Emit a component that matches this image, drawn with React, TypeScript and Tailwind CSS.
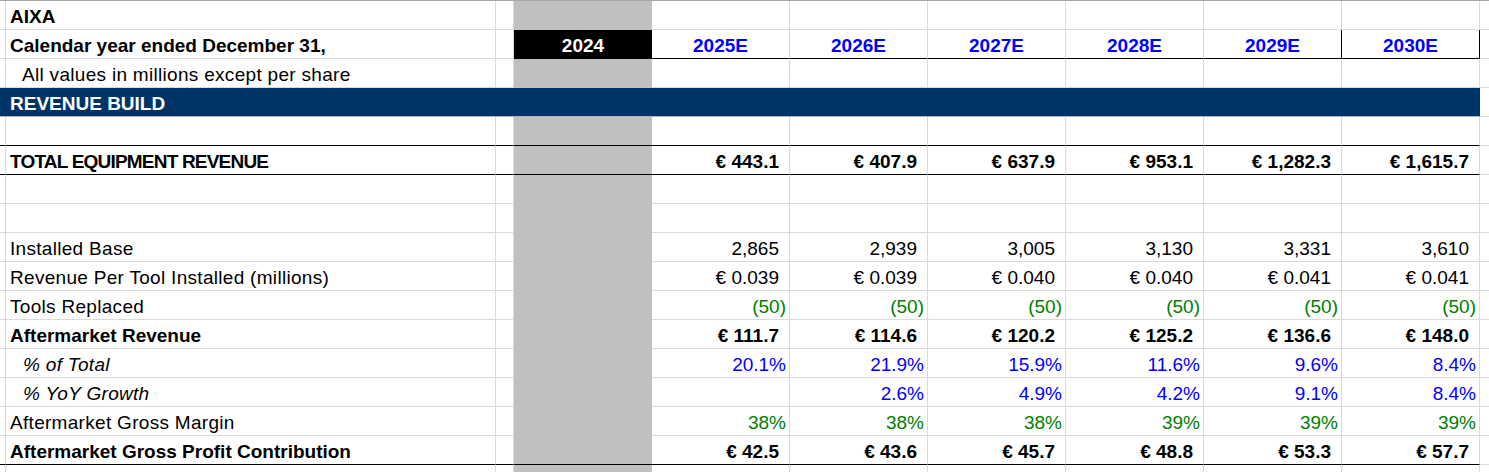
import React from "react";

const years = ["2025E", "2026E", "2027E", "2028E", "2029E", "2030E"];

type Line = {
  label?: React.ReactNode;
  labelCls?: string;
  values?: string[];
  valueCls?: string;
  bottom?: "black" | "grid";
};

const lines: Line[] = [
  { label: "AIXA", labelCls: "font-bold" },
  { label: "Calendar year ended December 31,", labelCls: "font-bold" },
  { label: "All values in millions except per share", labelCls: "pl-[16px] tracking-[0.3px]" },
  {},
  { bottom: "black" },
  {
    label: "TOTAL EQUIPMENT REVENUE",
    labelCls: "font-bold tracking-[-0.8px]",
    values: ["€ 443.1", "€ 407.9", "€ 637.9", "€ 953.1", "€ 1,282.3", "€ 1,615.7"],
    valueCls: "font-bold pr-[10px]",
    bottom: "black",
  },
  {},
  {},
  {
    label: "Installed Base",
    labelCls: "tracking-[0.3px]",
    values: ["2,865", "2,939", "3,005", "3,130", "3,331", "3,610"],
    valueCls: "pr-[10px]",
  },
  {
    label: "Revenue Per Tool Installed (millions)",
    labelCls: "tracking-[0.3px]",
    values: ["€ 0.039", "€ 0.039", "€ 0.040", "€ 0.040", "€ 0.041", "€ 0.041"],
    valueCls: "pr-[10px]",
  },
  {
    label: "Tools Replaced",
    labelCls: "tracking-[0.3px]",
    values: ["(50)", "(50)", "(50)", "(50)", "(50)", "(50)"],
    valueCls: "text-[#008000] pr-[3px]",
  },
  {
    label: "Aftermarket Revenue",
    labelCls: "font-bold",
    values: ["€ 111.7", "€ 114.6", "€ 120.2", "€ 125.2", "€ 136.6", "€ 148.0"],
    valueCls: "font-bold pr-[10px]",
  },
  {
    label: "% of Total",
    labelCls: "italic pl-[17px] tracking-[0.3px]",
    values: ["20.1%", "21.9%", "15.9%", "11.6%", "9.6%", "8.4%"],
    valueCls: "text-[#0000ff] pr-[3px]",
  },
  {
    label: "% YoY Growth",
    labelCls: "italic pl-[17px] tracking-[0.3px]",
    values: ["", "2.6%", "4.9%", "4.2%", "9.1%", "8.4%"],
    valueCls: "text-[#0000ff] pr-[3px]",
  },
  {
    label: "Aftermarket Gross Margin",
    labelCls: "tracking-[0.3px]",
    values: ["38%", "38%", "38%", "39%", "39%", "39%"],
    valueCls: "text-[#008000] pr-[3px]",
  },
  {
    label: "Aftermarket Gross Profit Contribution",
    labelCls: "font-bold",
    values: ["€ 42.5", "€ 43.6", "€ 45.7", "€ 48.8", "€ 53.3", "€ 57.7"],
    valueCls: "font-bold pr-[10px]",
    bottom: "black",
  },
  {},
];

function HeaderRow() {
  return (
    <div className="flex h-[29px]">
      <div className="w-[6px] shrink-0 border-r border-b border-[#dadada]" />
      <div className="w-[490px] shrink-0 border-r border-b border-[#dadada] flex items-center pl-[4px] pt-[3px] font-bold">
        Calendar year ended December 31,
      </div>
      <div className="w-[18px] shrink-0 border-r border-b border-[#dadada]" />
      <div className="w-[138px] shrink-0 bg-black border-b border-black flex items-center justify-center pt-[3px] font-bold text-white">
        2024
      </div>
      {years.map((y, i) => (
        <div
          key={y}
          className={`w-[138px] shrink-0 border-b border-b-black border-r flex items-center justify-center pt-[3px] font-bold text-[#0000ff] ${
            i >= 4 ? "border-r-black" : "border-r-[#dadada]"
          }`}
        >
          {y}
        </div>
      ))}
      <div className="flex-1 border-b border-[#dadada]" />
    </div>
  );
}

function BandRow() {
  return (
    <div className="flex h-[29px]">
      <div className="w-[1480px] shrink-0 bg-[#003366] border-b border-[#a9b4c2] flex items-center pl-[10px] pt-[3px] font-bold text-white">
        REVENUE BUILD
      </div>
      <div className="flex-1 border-b border-[#dadada]" />
    </div>
  );
}

function DataRow({ line }: { line: Line }) {
  const bb = line.bottom === "black" ? "border-b-black" : "border-b-[#dadada]";
  const grayB = line.bottom === "black" ? "border-b-black" : "border-b-[#c0c0c0]";
  return (
    <div className="flex h-[29px]">
      <div className={`w-[6px] shrink-0 border-r border-r-[#dadada] border-b ${bb}`} />
      <div
        className={`w-[490px] shrink-0 border-r border-r-[#dadada] border-b ${bb} flex items-center pl-[4px] pt-[3px] whitespace-nowrap ${
          line.labelCls ?? ""
        }`}
      >
        {line.label}
      </div>
      <div className={`w-[18px] shrink-0 border-r border-r-[#dadada] border-b ${bb}`} />
      <div className={`w-[138px] shrink-0 bg-[#c0c0c0] border-b ${grayB}`} />
      {years.map((y, i) => (
        <div
          key={y}
          className={`w-[138px] shrink-0 border-r border-r-[#dadada] border-b ${bb} flex items-center justify-end pt-[3px] whitespace-nowrap ${
            line.valueCls ?? ""
          }`}
        >
          {line.values?.[i] ?? ""}
        </div>
      ))}
      <div className="flex-1 border-b border-b-[#dadada]" />
    </div>
  );
}

export default function App() {
  return (
    <div className="w-[1489px] h-[472px] overflow-hidden bg-white border-t border-[#a6a6a6] font-['Liberation_Sans',Arial,sans-serif] text-[19px] leading-none text-black">
      {lines.map((line, i) => {
        if (i === 1) return <HeaderRow key={i} />;
        if (i === 3) return <BandRow key={i} />;
        return <DataRow key={i} line={line} />;
      })}
    </div>
  );
}
